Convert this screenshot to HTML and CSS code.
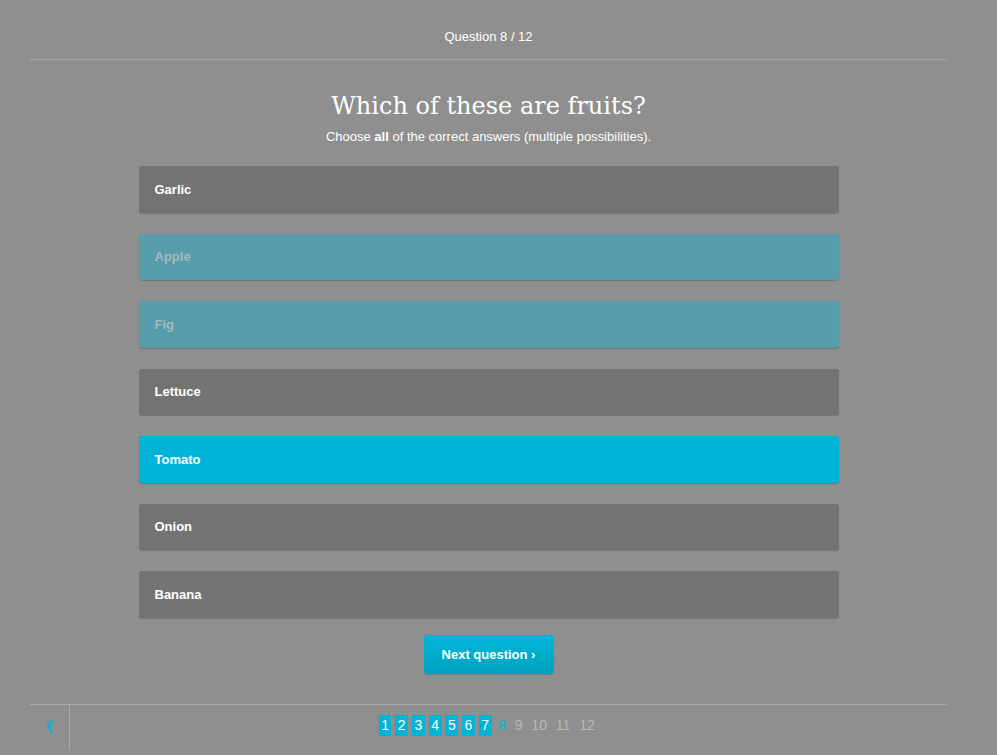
FILE: index.html
```html
<!DOCTYPE html>
<html>
<head>
<meta charset="utf-8">
<link rel="stylesheet" href="styles.css">
</head>
<body>
<div class="quiz">
  <header class="quiz-header">Question 8 / 12</header>
  <main class="quiz-body">
    <h1 class="quiz-title">Which of these are fruits?</h1>
    <p class="quiz-sub">Choose <b>all</b> of the correct answers (multiple possibilities).</p>
    <ul class="answers">
      <li class="answer">Garlic</li>
      <li class="answer answer-muted">Apple</li>
      <li class="answer answer-muted">Fig</li>
      <li class="answer">Lettuce</li>
      <li class="answer answer-selected">Tomato</li>
      <li class="answer">Onion</li>
      <li class="answer">Banana</li>
    </ul>
    <div class="actions"><button class="next-btn">Next question ›</button></div>
  </main>
  <footer class="quiz-footer">
    <div class="back">
      <svg width="8" height="14" viewBox="0 0 8 14"><polyline points="6.5,1 2,7 6.5,13" fill="none" stroke="#00b4d8" stroke-width="2.6" stroke-linejoin="miter"/></svg>
    </div>
    <nav class="pager">
      <span class="pg done">1</span> <span class="pg done">2</span> <span class="pg done">3</span> <span class="pg done">4</span> <span class="pg done">5</span> <span class="pg done">6</span> <span class="pg done">7</span> <span class="pg current">8</span> <span class="pg">9</span> <span class="pg">10</span> <span class="pg">11</span> <span class="pg">12</span>
    </nav>
  </footer>
</div>
</body>
</html>
```
FILE: styles.css
```css
html, body {
  margin: 0;
  padding: 0;
  background: #8f8f8f;
  font-family: "Liberation Sans", Arial, sans-serif;
  color: #fff;
}
.quiz {
  margin: 0 50px 0 30px;
}
.quiz-header {
  padding: 29px 0 14px;
  line-height: 16px;
  font-size: 13px;
  text-align: center;
  border-bottom: 1px solid #a9a9a9;
}
.quiz-body {
  display: flex;
  flex-direction: column;
  align-items: center;
}
.quiz-title {
  margin: 29px 0 0;
  font-family: "DejaVu Serif", Georgia, serif;
  font-weight: normal;
  font-size: 24px;
  line-height: 34px;
}
.quiz-sub {
  margin: 5.5px 0 0;
  font-size: 13px;
  line-height: 16px;
}
.quiz-sub b { font-weight: bold; }
.answers {
  list-style: none;
  margin: 21.5px 0 0;
  padding: 0;
  width: 700px;
}
.answer {
  height: 46.5px;
  display: flex;
  align-items: center;
  padding: 0 16px;
  margin-bottom: 21px;
  background: #737373;
  border-radius: 3px;
  box-shadow: 0 1px 1px rgba(0,0,0,0.18);
  font-size: 13px;
  font-weight: bold;
  color: #fff;
}
.answer:last-child { margin-bottom: 0; }
.answer-muted {
  background: #579dab;
  color: #a6b8bd;
}
.answer-selected {
  background: #00b4d8;
}
.actions {
  margin-top: 17px;
}
.next-btn {
  width: 130px;
  height: 39px;
  border: 0;
  border-radius: 3px;
  background: linear-gradient(#00b6d9, #00a2c0);
  box-shadow: 0 1px 1px rgba(0,0,0,0.15);
  color: #fff;
  font-family: "Liberation Sans", Arial, sans-serif;
  font-weight: bold;
  font-size: 13px;
  padding: 0;
}
.quiz-footer {
  margin-top: 30px;
  border-top: 1px solid #a9a9a9;
  display: flex;
  height: 45px;
}
.back {
  width: 40px;
  border-right: 1px solid #a9a9a9;
  display: flex;
  align-items: center;
  justify-content: center;
  padding-bottom: 3px;
  box-sizing: border-box;
}
.pager {
  flex: 1;
  text-align: center;
  padding-top: 10px;
  margin-left: -41px;
  font-size: 14px;
  line-height: 21px;
}
.pg {
  display: inline-block;
  padding: 0 2.5px;
  color: #b8b8b8;
}
.pg.done {
  background: #00b4d8;
  color: #fff;
}
.pg.current {
  color: #00b4d8;
}
```
